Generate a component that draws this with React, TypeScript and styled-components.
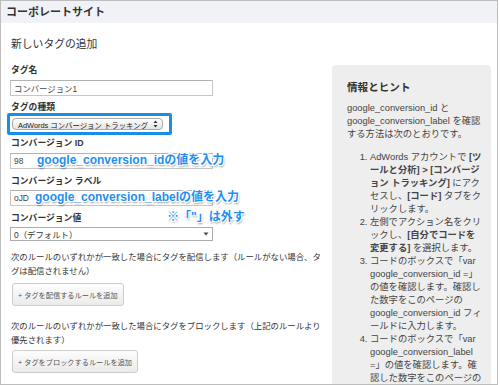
import styled, { createGlobalStyle } from 'styled-components';

const GlobalStyle = createGlobalStyle`
  html, body {
    margin: 0;
    padding: 0;
    background: #fff;
  }
  body {
    font-family: "Liberation Sans", "Noto Sans CJK JP", sans-serif;
    color: #333;
  }
`;

const Frame = styled.div`
  box-sizing: border-box;
  width: 498px;
  height: 385px;
  border: 1px solid #bdbdbd;
  overflow: hidden;
`;

const Header = styled.div`
  height: 22px;
  padding-left: 5px;
  background: #f1f2f7;
  font-size: 11px;
  font-weight: bold;
  line-height: 22px;
  color: #333;
`;

const Body = styled.div`
  display: flex;
  align-items: flex-start;
`;

const Main = styled.div`
  display: flex;
  flex-direction: column;
  align-items: flex-start;
  width: 314px;
  padding: 14px 0 0 9px;
`;

const Title = styled.div`
  font-size: 10.8px;
  line-height: 14px;
  color: #333;
  padding-left: 1px;
`;

const Label = styled.div<{ $top: number }>`
  margin-top: ${(p) => p.$top}px;
  padding-left: 1px;
  font-size: 8.8px;
  font-weight: bold;
  line-height: 12px;
  color: #333;
`;

const FieldWrap = styled.div<{ $top: number }>`
  position: relative;
  margin-top: ${(p) => p.$top}px;
`;

const TextInput = styled.input`
  box-sizing: border-box;
  display: block;
  width: 203px;
  height: 16px;
  margin: 0;
  padding: 0 3px;
  border: 1px solid #c6c6c6;
  border-top-color: #b2b2b2;
  background: #fff;
  font-family: inherit;
  font-size: 8.4px;
  color: #444;
  outline: none;
`;

const Callout = styled.div<{ $left: number; $top: number }>`
  position: absolute;
  left: ${(p) => p.$left}px;
  top: ${(p) => p.$top}px;
  white-space: nowrap;
  font-size: 12px;
  font-weight: bold;
  line-height: 14px;
  color: #1f8ff0;
  text-shadow:
    -1px -1px 0 #fff, 1px -1px 0 #fff, -1px 1px 0 #fff, 1px 1px 0 #fff,
    0 -1px 0 #fff, 0 1px 0 #fff, -1px 0 0 #fff, 1px 0 0 #fff,
    1px 2px 2px rgba(0, 0, 0, 0.45);
`;

const Highlight = styled.div`
  box-sizing: border-box;
  width: 165px;
  height: 22px;
  margin-left: -3px;
  padding: 2px 6px 0 2px;
  border: 3px solid #1a8ee6;
  border-radius: 2px;
`;

const SelectButton = styled.div`
  box-sizing: border-box;
  display: flex;
  align-items: center;
  justify-content: space-between;
  height: 12px;
  padding: 0 4px 0 5px;
  border: 1px solid #a9a9a9;
  border-radius: 4px;
  background: linear-gradient(#ffffff, #e4e4e4);
  font-size: 7.4px;
  color: #222;
  white-space: nowrap;
`;

const SelectBox = styled.div`
  box-sizing: border-box;
  display: flex;
  align-items: center;
  justify-content: space-between;
  width: 203px;
  height: 14px;
  margin-top: 3px;
  padding: 0 3px 0 3px;
  border: 1px solid #ababab;
  background: #fff;
  font-size: 8.4px;
  color: #333;
`;

const Para = styled.p<{ $top: number }>`
  width: 314px;
  margin: ${(p) => p.$top}px 0 0;
  padding-left: 1px;
  font-size: 8.4px;
  line-height: 14px;
  color: #333;
`;

const RuleButton = styled.button<{ $top: number }>`
  height: 23px;
  margin: ${(p) => p.$top}px 0 0 2px;
  padding: 0 5px;
  border: 1px solid #cdcdcd;
  border-radius: 3px;
  background: linear-gradient(#fdfdfd, #ebebeb);
  font-family: inherit;
  font-size: 7.2px;
  color: #555;
  white-space: nowrap;
`;

const Aside = styled.div`
  box-sizing: border-box;
  width: 159px;
  height: 400px;
  margin: 42px 0 0 8px;
  padding: 15px 6px 0 15px;
  border-radius: 4px;
  background: #eeeeee;
  white-space: nowrap;
  color: #444;
`;

const AsideTitle = styled.div`
  font-size: 10.6px;
  font-weight: bold;
  line-height: 14px;
  color: #333;
`;

const AsideText = styled.p`
  margin: 8px 0 0;
  font-size: 9.3px;
  line-height: 13px;
`;

const Steps = styled.ol`
  margin: 10px 0 0;
  padding-left: 23px;
  font-size: 9.3px;
  line-height: 13px;
`;

const UpDown = () => (
  <svg width="5" height="8" viewBox="0 0 5 8">
    <path d="M2.5 0.5 L4.5 3 H0.5 Z M2.5 7.5 L4.5 5 H0.5 Z" fill="#333" />
  </svg>
);

const Caret = () => (
  <svg width="6" height="4" viewBox="0 0 6 4">
    <path d="M0.5 0.5 H5.5 L3 3.5 Z" fill="#444" />
  </svg>
);

export default function App() {
  return (
    <>
      <GlobalStyle />
      <Frame>
        <Header>コーポレートサイト</Header>
        <Body>
          <Main>
            <Title>新しいタグの追加</Title>

            <Label $top={13}>タグ名</Label>
            <FieldWrap $top={4}>
              <TextInput readOnly value="コンバージョン1" />
            </FieldWrap>

            <Label $top={5}>タグの種類</Label>
            <Highlight>
              <SelectButton>
                <span>AdWords コンバージョン トラッキング</span>
                <UpDown />
              </SelectButton>
            </Highlight>

            <Label $top={2}>コンバージョン ID</Label>
            <FieldWrap $top={4}>
              <TextInput readOnly value="98" />
              <Callout $left={27} $top={0}>google_conversion_idの値を入力</Callout>
            </FieldWrap>

            <Label $top={6}>コンバージョン ラベル</Label>
            <FieldWrap $top={3}>
              <TextInput readOnly value="oJD" />
              <Callout $left={25} $top={0}>google_conversion_labelの値を入力</Callout>
              <Callout $left={157} $top={20}>※「"」は外す</Callout>
            </FieldWrap>

            <Label $top={6}>コンバージョン値</Label>
            <SelectBox>
              <span>0（デフォルト）</span>
              <Caret />
            </SelectBox>

            <Para $top={9}>
              次のルールのいずれかが一致した場合にタグを配信します（ルールがない場合、タグは配信されません）
            </Para>
            <RuleButton $top={5}>+ タグを配信するルールを追加</RuleButton>

            <Para $top={13}>
              次のルールのいずれかが一致した場合にタグをブロックします（上記のルールより優先されます）
            </Para>
            <RuleButton $top={3}>+ タグをブロックするルールを追加</RuleButton>
          </Main>

          <Aside>
            <AsideTitle>情報とヒント</AsideTitle>
            <AsideText>
              google_conversion_id と<br />
              google_conversion_label を確認<br />
              する方法は次のとおりです。
            </AsideText>
            <Steps>
              <li>
                AdWords アカウントで <b>[ツ<br />
                ールと分析] &gt; [コンバージ<br />
                ョン トラッキング]</b> にアク<br />
                セスし、<b>[コード]</b> タブをク<br />
                リックします。
              </li>
              <li>
                左側でアクション名をクリ<br />
                ックし、<b>[自分でコードを<br />
                変更する]</b> を選択します。
              </li>
              <li>
                コードのボックスで「var<br />
                google_conversion_id =」<br />
                の値を確認します。確認し<br />
                た数字をこのページの<br />
                google_conversion_id フィ<br />
                ールドに入力します。
              </li>
              <li>
                コードのボックスで「var<br />
                google_conversion_label<br />
                =」の値を確認します。確<br />
                認した数字をこのページの
              </li>
            </Steps>
          </Aside>
        </Body>
      </Frame>
    </>
  );
}
